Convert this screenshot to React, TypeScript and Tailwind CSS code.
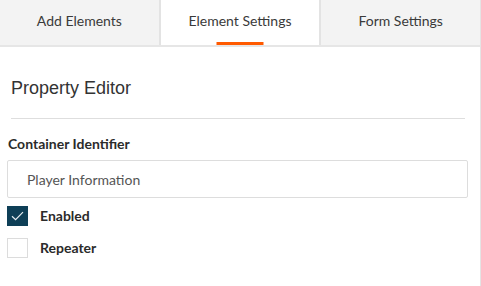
import React, { useState } from 'react';

const tabs = ['Add Elements', 'Element Settings', 'Form Settings'];

const Checkbox: React.FC<{ checked: boolean; label: string; onToggle: () => void }> = ({ checked, label, onToggle }) => (
  <label className="flex items-center gap-3 cursor-pointer" onClick={onToggle}>
    {checked ? (
      <span className="w-[21px] h-[20px] bg-[#0e3f57] flex items-center justify-center">
        <svg width="13" height="10" viewBox="0 0 13 10" fill="none">
          <path d="M1 5.2 L4.6 8.6 L12 1.2" stroke="#e8eef2" strokeWidth="1.2" />
        </svg>
      </span>
    ) : (
      <span className="w-[21px] h-[20px] border border-[#dcdcdc] bg-white" />
    )}
    <span className="text-[14px] font-bold text-[#2b2b2b]">{label}</span>
  </label>
);

export default function App() {
  const [active, setActive] = useState(1);
  const [enabled, setEnabled] = useState(true);
  const [repeater, setRepeater] = useState(false);

  return (
    <div className="w-[481px] h-[286px] bg-white border-r border-[#e4e4e4] font-['Lato','Open_Sans',sans-serif]">
      {/* tab bar */}
      <div className="flex h-[47px] bg-[#f3f3f3] border-b-2 border-[#e6e6e6]">
        {tabs.map((t, i) => (
          <button
            key={t}
            onClick={() => setActive(i)}
            className={
              'relative flex-1 flex items-center justify-center text-[14px] text-[#3a3a3a] pb-[4px] ' +
              (i > 0 ? 'border-l-2 border-[#e3e3e3] ' : '') +
              (i === active ? 'bg-white' : 'bg-[#f3f3f3]')
            }
          >
            {t}
            {i === active && (
              <span className="absolute bottom-0 left-1/2 -translate-x-1/2 w-[47px] h-[3px] bg-[#ff5a00]" />
            )}
          </button>
        ))}
      </div>

      {/* property editor */}
      <div className="pl-[11px] pr-[15px] pt-[31px]">
        <h2 className="text-[18px] leading-[20px] text-[#333] font-['Liberation_Sans',Arial,sans-serif]">Property Editor</h2>
        <div className="mt-[20px] h-px bg-[#dedede]" />
      </div>

      <div className="px-[7px] pr-[12px] pt-[16px]">
        <div className="pl-px text-[14px] font-bold text-[#2b2b2b] leading-[18px]">Container Identifier</div>
        <div className="mt-[7px] h-[38px] border border-[#dddddd] rounded-[2px] flex items-center px-[19px] text-[14px] text-[#555]">
          Player Information
        </div>
        <div className="mt-[7px] flex flex-col gap-[11px]">
          <Checkbox checked={enabled} label="Enabled" onToggle={() => setEnabled(!enabled)} />
          <Checkbox checked={repeater} label="Repeater" onToggle={() => setRepeater(!repeater)} />
        </div>
      </div>
    </div>
  );
}
